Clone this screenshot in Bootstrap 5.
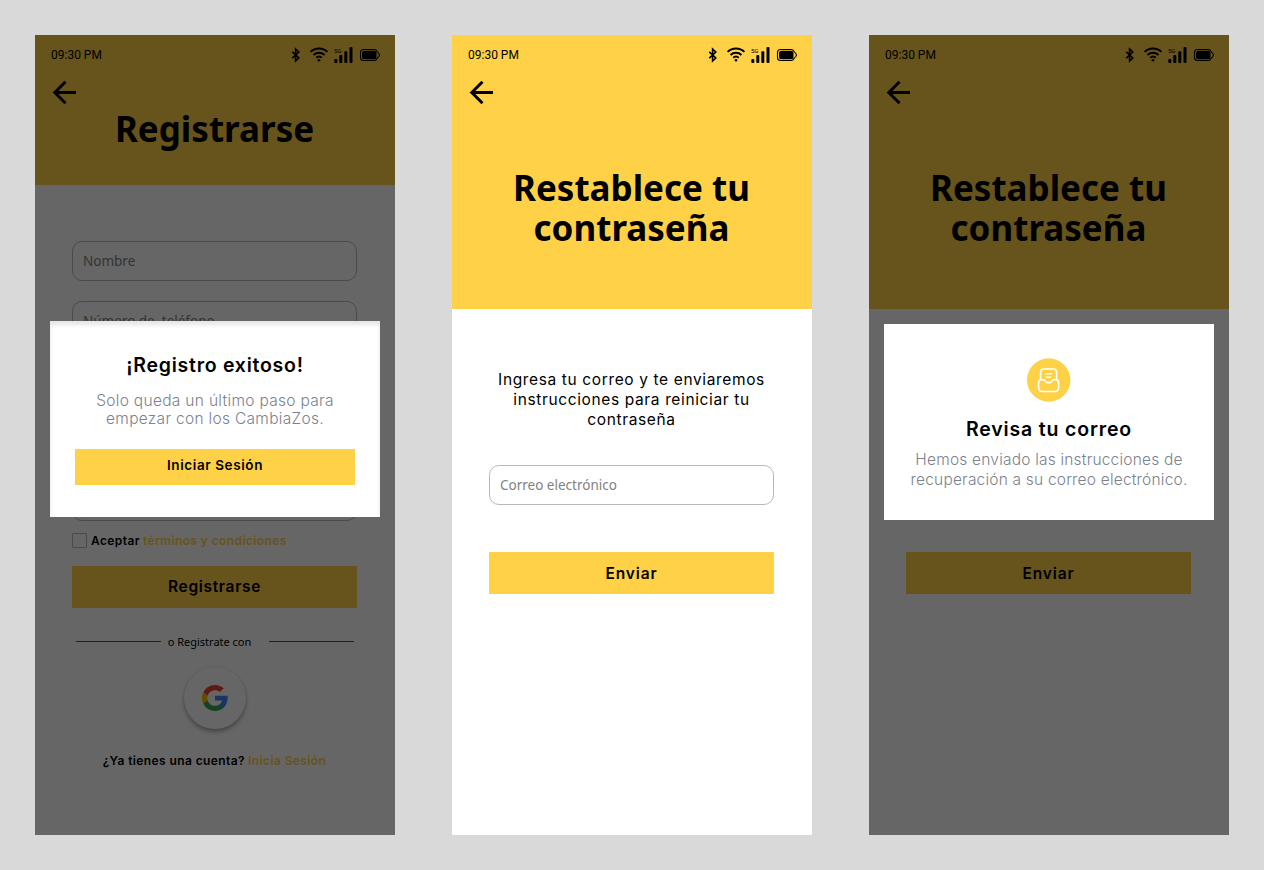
<!DOCTYPE html>
<html lang="es">
<head>
<meta charset="utf-8">
<meta name="viewport" content="width=device-width, initial-scale=1">
<title>CambiaZos</title>
<link href="https://cdn.jsdelivr.net/npm/bootstrap@5.3.0/dist/css/bootstrap.min.css" rel="stylesheet">
<style>
body{background:#d9d9d9;font-family:Inter,"Noto Sans",sans-serif;color:#000;margin:0}
.board{padding:35px;gap:57px;width:1264px;height:870px}
.phone{width:360px;height:800px;background:#fff}
.hero{background:#ffd147}
.hero-sm{height:150px}.hero-lg{height:274px}
.status{height:40px;padding:0 15px 0 16px;font:400 12px/40px Roboto,sans-serif}
.back{margin:5px 0 0 17px;width:26px;height:26px}
.title{font:700 35px/40px "Noto Sans",sans-serif;margin:0 1px 0 0;white-space:nowrap}
.hero-sm .title{margin-top:3px}.hero-lg .title{margin-top:62px}
.form-area{padding:0 38px 0 37px}
.signup{padding-top:56px}.sent{padding-top:243px}
.fields{gap:20px}
.field{height:40px;border:1px solid #b9b9b9;border-radius:10px;padding:0 10px;font:400 13.5px/38px "Noto Sans",sans-serif;color:#828282;white-space:pre}
.cta{background:#ffd147;border:0;border-radius:0;height:42px;width:100%;padding:0;font-weight:600;font-size:15.5px;line-height:42px;color:#000;letter-spacing:.68px}
.send{letter-spacing:.86px;line-height:43px}
.accept{margin-top:12px;gap:4px;height:15px}
.tick{width:15px;height:15px;border:1px solid #b9b9b9;border-radius:1px}
.sm-txt{font-size:12px;line-height:16px;font-weight:600;white-space:pre;letter-spacing:.4px}
.accept .gold{margin-left:-1px}
.gold{color:#ffd147}
.register{margin-top:18px}
.divider{margin:26px 3px 0 4px;height:16px}
.rule{height:1px;width:85px;background:#555;margin-top:-2px}
.or-txt{font:400 11px/16px "Noto Sans",sans-serif;margin-left:-11px}
.google{width:62px;height:62px;margin-top:17px;border-radius:50%;background:#fff;box-shadow:0 3px 4px rgba(0,0,0,.3),0 0 2px rgba(0,0,0,.12)}
.account{margin-top:24px;gap:3px}
.dim{background:rgba(0,0,0,.6)}
.dialog-box{left:15px;width:330px;height:196px;background:#fff}
.d1{top:286px;padding:32px 25px 0;box-shadow:inset 0 4px 4px rgba(0,0,0,.1)}
.d2{top:289px;padding-top:34px}
.d-title{font-weight:600;font-size:19.5px;line-height:24px;letter-spacing:.74px}
.d2 .d-title{margin-top:15px;letter-spacing:.83px}
.d-text{font-weight:300;font-size:15.5px;color:#7b828e}
.d1 .d-text{line-height:18px;margin-top:15px;letter-spacing:.31px}
.d2 .d-text{line-height:20px;margin-top:9px;letter-spacing:.2px}
.d1 .cta{height:36px;line-height:32px;padding-bottom:4px;font-size:13.5px;margin-top:21px;letter-spacing:.6px}
.intro{padding-top:61px;font-size:15.5px;line-height:20px;letter-spacing:.63px}
.mail{margin-top:35px}.mail+.cta{margin-top:47px}
</style>
</head>
<body>
<svg class="d-none">
<symbol id="i-status" viewBox="0 0 90 20">
<path d="M2.300 6.800l6.500 6.200-3.200 3V4l3.200 3-6.500 6.200" fill="none" stroke="#000" stroke-width="1.600"/>
<g fill="none" stroke="#000" stroke-width="1.900"><path d="M20.600 6.900a12 12 0 0 1 16.800 0"/><path d="M23.500 10a8 8 0 0 1 11 0"/><path d="M26.200 12.700a4.200 4.200 0 0 1 5.600 0"/></g><circle cx="29" cy="15.200" r="1.300"/>
<text x="44" y="8" font-family="Roboto, sans-serif" font-size="6">5G</text>
<rect x="44.300" y="14" width="3" height="4" rx="1"/><rect x="49.300" y="10" width="3" height="8" rx="1"/><rect x="54.300" y="6.300" width="3" height="11.700" rx="1"/><rect x="59.500" y="2" width="3" height="16" rx="1"/>
<path d="M73.500 4.500h10.500q2.300 0 3 2l1.800 2q1.200 1.500 0 3l-1.800 2q-.7 2-3 2H73.500q-3 0-3-3v-5q0-3 3-3z" fill="none" stroke="#000" stroke-width="1.100"/><rect x="72" y="5.700" width="14.500" height="8.600" rx="2.500"/>
</symbol>
<symbol id="i-back" viewBox="0 0 26 26"><path d="M24 12.500H3M13.500 1.800L2.800 12.500l10.700 10.700" fill="none" stroke="#000" stroke-width="3"/></symbol>
</svg>
<main class="board d-flex">
<section class="phone position-relative">
<header class="hero hero-sm d-flex flex-column">
<div class="status d-flex justify-content-between align-items-center"><span>09:30 PM</span><svg width="90" height="20"><use href="#i-status"/></svg></div>
<svg class="back"><use href="#i-back"/></svg>
<h1 class="title text-center">Registrarse</h1>
</header>
<div class="form-area signup d-flex flex-column">
<div class="fields d-flex flex-column">
<div class="field">Nombre</div>
<div class="field">Número de  teléfono</div>
<div class="field"></div><div class="field"></div><div class="field"></div>
</div>
<div class="accept d-flex align-items-center"><span class="tick"></span><span class="sm-txt">Aceptar</span><span class="sm-txt gold">términos y condiciones</span></div>
<button class="btn cta register">Registrarse</button>
<div class="divider d-flex align-items-center justify-content-between"><span class="rule"></span><span class="or-txt">o Registrate con</span><span class="rule"></span></div>
<div class="google d-flex align-items-center justify-content-center align-self-center"><svg width="26" height="26" viewBox="0 0 48 48"><path fill="#4285f4" d="M47.500 19.800H24v9h13c-.6 3-2.300 5.500-4.800 7.200v6h7.800c4.500-4.200 7.500-10.300 7.500-22.200z"/><path fill="#34a853" d="M24 48c6.500 0 12-2.100 16-5.800l-7.800-6c-2.200 1.400-4.900 2.300-8.200 2.300-6.300 0-11.600-4.200-13.500-10H2.500v6.200C6.500 42.600 14.600 48 24 48z"/><path fill="#fbbc05" d="M10.500 28.500a14.400 14.400 0 0 1 0-9.100l-8-6.200a24 24 0 0 0 0 21.500z"/><path fill="#ea4335" d="M24 9.500c3.500 0 6.700 1.200 9.200 3.600l6.900-6.900C35.900 2.400 30.400 0 24 0 14.600 0 6.500 5.400 2.500 13.200l8 6.200C12.400 13.700 17.700 9.500 24 9.500z"/></svg></div>
<div class="account d-flex justify-content-center"><span class="sm-txt">¿Ya tienes una cuenta?</span><span class="sm-txt gold">Inicia Sesión</span></div>
</div>
<div class="dim position-absolute top-0 start-0 w-100 h-100"></div>
<div class="dialog-box d1 position-absolute text-center">
<div class="d-title">¡Registro exitoso!</div>
<div class="d-text">Solo queda un último paso para<br>empezar con los CambiaZos.</div>
<button class="btn cta">Iniciar Sesión</button>
</div>
</section>
<section class="phone">
<header class="hero hero-lg d-flex flex-column">
<div class="status d-flex justify-content-between align-items-center"><span>09:30 PM</span><svg width="90" height="20"><use href="#i-status"/></svg></div>
<svg class="back"><use href="#i-back"/></svg>
<h1 class="title text-center">Restablece tu<br>contraseña</h1>
</header>
<div class="form-area">
<p class="intro text-center text-nowrap mb-0">Ingresa tu correo y te enviaremos<br>instrucciones para reiniciar tu<br>contraseña</p>
<div class="field mail">Correo electrónico</div>
<button class="btn cta send">Enviar</button>
</div>
</section>
<section class="phone position-relative">
<header class="hero hero-lg d-flex flex-column">
<div class="status d-flex justify-content-between align-items-center"><span>09:30 PM</span><svg width="90" height="20"><use href="#i-status"/></svg></div>
<svg class="back"><use href="#i-back"/></svg>
<h1 class="title text-center">Restablece tu<br>contraseña</h1>
</header>
<div class="form-area sent"><button class="btn cta send">Enviar</button></div>
<div class="dim position-absolute top-0 start-0 w-100 h-100"></div>
<div class="dialog-box d2 position-absolute text-center">
<svg class="d-block mx-auto" width="44" height="44" viewBox="0 0 44 44"><circle cx="21.700" cy="22" r="21.700" fill="#ffd147"/><g fill="none" stroke="#fff" stroke-width="1.600" stroke-linecap="round" stroke-linejoin="round" transform="translate(-.4)"><path d="M14 21.500V14q0-3 3-3h10q3 0 3 3v7.500M19.500 15.800h5.500M20 19.300h4"/><path d="M15 21.800q-3 0-3 3v4.700q0 4 4 4h12q4 0 4-4v-4.700q0-3-3-3h-1.500q-1.200 0-1.900 1l-.8 1q-.7.8-1.700.8h-2.200q-1 0-1.700-.8l-.8-1q-.7-1-1.900-1z"/></g></svg>
<div class="d-title">Revisa tu correo</div>
<div class="d-text">Hemos enviado las instrucciones de<br>recuperación a su correo electrónico.</div>
</div>
</section>
</main>
<script src="https://cdn.jsdelivr.net/npm/bootstrap@5.3.0/dist/js/bootstrap.bundle.min.js"></script>
</body>
</html>
